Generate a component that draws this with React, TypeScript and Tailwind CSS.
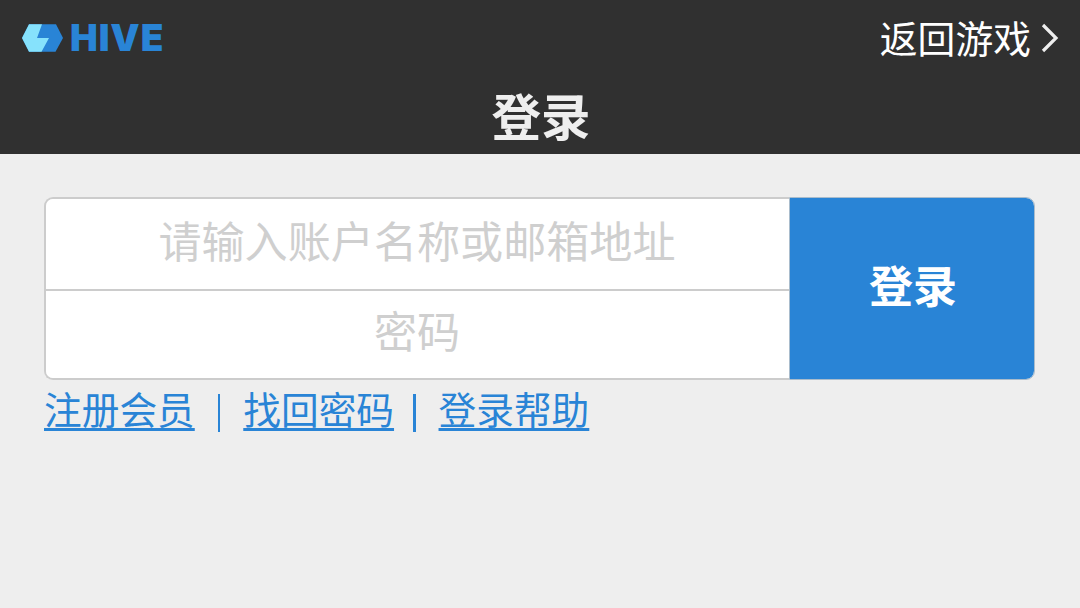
import React, { useState } from 'react';

const links = [
  { label: '注册会员', gap: '' },
  { label: '找回密码', gap: 'ml-[23px]' },
  { label: '登录帮助', gap: 'ml-[19px]' },
];

function Logo() {
  return (
    <div className="flex items-center">
      <svg width="42" height="28" viewBox="0 0 42 28" className="block">
        <path d="M7 0.3H34L41 14L33.5 27.7H7L0 14Z" fill="#2984d6" />
        <path d="M7 0.3H20L15 14H27L19.5 27.7H7L0 14Z" fill="#86e2fc" />
      </svg>
      <span className="ml-[6px] font-['Inter','Liberation_Sans',sans-serif] text-[37px] leading-[28px] font-black tracking-[0.9px] text-[#2984d6]">
        HIVE
      </span>
    </div>
  );
}

export default function App() {
  const [account, setAccount] = useState('');
  const [password, setPassword] = useState('');

  const inputClass =
    'block w-full min-h-0 bg-white pb-[11px] pr-[1px] text-center text-[43.1px] leading-[60px] text-gray-800 placeholder:text-[#cfcfcf] focus:outline-none';

  return (
    <div className="h-screen overflow-hidden bg-[#eeeeee] font-['Noto_Sans_CJK_SC',sans-serif]">
      {/* Header */}
      <header className="h-[154px] bg-[#303030]">
        <div className="flex h-[76px] items-center justify-between pl-[22px] pr-[21px]">
          <Logo />
          <a href="#" className="flex items-center text-[37.8px] leading-[56px] text-white">
            <span className="pb-[3px]">返回游戏</span>
            <svg width="18" height="30" viewBox="0 0 18 30" fill="none" className="ml-[10px]">
              <path d="M2 2L15 15L2 28" stroke="#eeeeee" strokeWidth="3.2" />
            </svg>
          </a>
        </div>
        <h1 className="pl-[2px] pt-[3px] text-center text-[49.5px] leading-[72px] font-bold text-[#eeeeee]">登录</h1>
      </header>

      {/* Login form */}
      <main className="px-[44px] pt-[43px]">
        <form onSubmit={(e) => e.preventDefault()} className="flex h-[183px] w-[991px]">
          <div className="flex w-[745px] flex-col overflow-hidden rounded-l-[9px] border-y-2 border-l-2 border-[#cccccc]">
            <input
              type="text"
              value={account}
              onChange={(e) => setAccount(e.target.value)}
              placeholder="请输入账户名称或邮箱地址"
              className={`${inputClass} h-[92px] border-b-2 border-[#cccccc]`}
            />
            <input
              type="password"
              value={password}
              onChange={(e) => setPassword(e.target.value)}
              placeholder="密码"
              className={`${inputClass} h-[87px]`}
            />
          </div>
          <button
            type="submit"
            className="flex-1 rounded-r-[9px] border border-[#a9bccc] bg-[#2984d6] bg-clip-padding pb-[9px] pl-[2px] text-[44px] font-bold text-white"
          >
            登录
          </button>
        </form>

        {/* Account links */}
        <nav className="flex items-start text-[37.7px] leading-[56px] text-[#2984d6]">
          {links.map(({ label, gap }, i) => (
            <React.Fragment key={label}>
              {i > 0 && <span className={`${gap} mr-[23px] mt-[14px] h-[38px] w-[2.5px] bg-[#2984d6]`} />}
              <a href="#" className="underline decoration-[3px] underline-offset-[4px] [text-decoration-skip-ink:none]">
                {label}
              </a>
            </React.Fragment>
          ))}
        </nav>
      </main>
    </div>
  );
}
